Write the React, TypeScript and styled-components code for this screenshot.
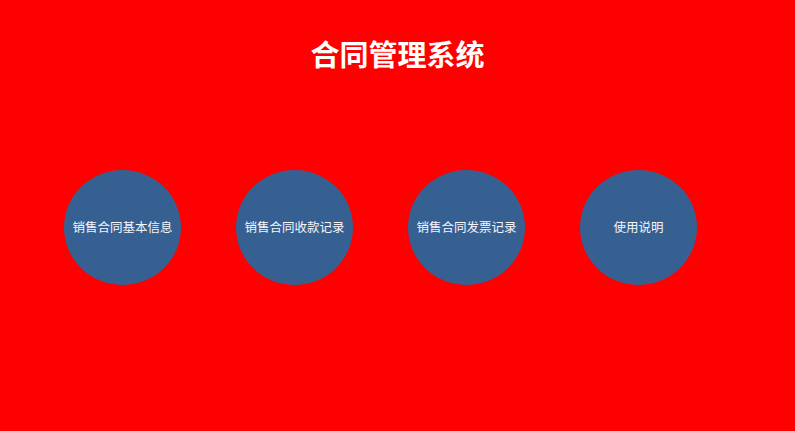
import React from "react";
import styled, { createGlobalStyle } from "styled-components";

// --- 전역 스타일 ---
const GlobalStyle = createGlobalStyle`
  html, body {
    margin: 0;
    padding: 0;
    background-color: #ff0000;
  }
  body {
    font-family: "Noto Sans CJK SC", "Noto Sans", sans-serif;
  }
`;

const Page = styled.div`
  width: 795px;
  height: 431px;
  background-color: #ff0000;
  display: flex;
  flex-direction: column;
  overflow: hidden;
`;

const Title = styled.h1`
  margin: 39px 0 0;
  height: 29px;
  line-height: 29px;
  font-size: 29px;
  font-weight: 700;
  color: #ffffff;
  text-align: center;
`;

const MenuRow = styled.div`
  display: flex;
  gap: 55px;
  margin-top: 102px;
  padding-left: 64px;
`;

const MenuCircle = styled.button`
  width: 117px;
  height: 115px;
  border: none;
  border-radius: 50%;
  background-color: #376092;
  color: #f4f6fa;
  font-family: inherit;
  font-size: 12.5px;
  padding: 0 0 3px;
  display: flex;
  align-items: center;
  justify-content: center;
  cursor: pointer;
  white-space: nowrap;
`;

const menus = ["销售合同基本信息", "销售合同收款记录", "销售合同发票记录", "使用说明"];

export default function App() {
  return (
    <>
      <GlobalStyle />
      <Page>
        <Title>合同管理系统</Title>
        <MenuRow>
          {menus.map((m) => (
            <MenuCircle key={m} type="button">
              {m}
            </MenuCircle>
          ))}
        </MenuRow>
      </Page>
    </>
  );
}
